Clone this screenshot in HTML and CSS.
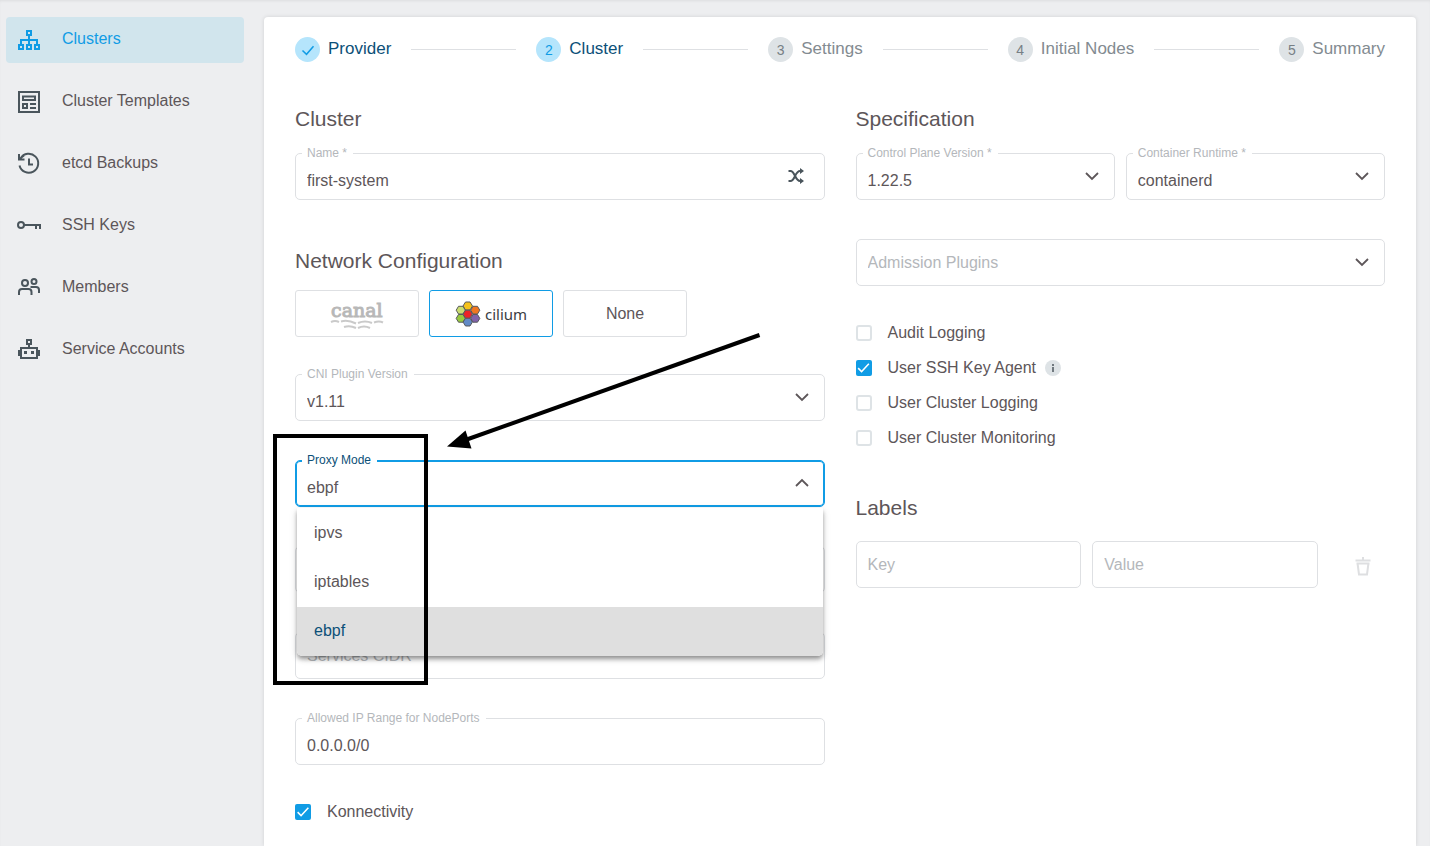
FILE: index.html
```html
<!DOCTYPE html>
<html lang="en">
<head>
<meta charset="utf-8">
<meta name="viewport" content="width=device-width, initial-scale=1">
<title>Create Cluster</title>
<link rel="stylesheet" href="styles.css">
</head>
<body>
<svg class="symbols" aria-hidden="true">
  <symbol id="chevron" viewBox="0 0 16 16"><path d="M2 5l6 6 6-6" fill="none" stroke="currentColor" stroke-width="1.8"/></symbol>
</svg>
<div class="page">
  <nav class="sidebar" aria-label="Project">
    <a class="nav-item active" href="#clusters">
      <svg class="nav-icon" viewBox="0 0 24 24"><g fill="none" stroke="currentColor" stroke-width="2"><path d="M10 3h4v4h-4zM2 17h4v4H2zM10 17h4v4h-4zM18 17h4v4h-4zM12 7v10M4 17v-5h16v5"/></g></svg>
      <span>Clusters</span>
    </a>
    <a class="nav-item" href="#templates">
      <svg class="nav-icon" viewBox="0 0 24 24"><path d="M2 2h20v20H2zM6 6.500h12v3.500H6zM6 14h4v4H6zM13 14h6M13 18h6" fill="none" stroke="currentColor" stroke-width="2"/></svg>
      <span>Cluster Templates</span>
    </a>
    <a class="nav-item" href="#backups">
      <svg class="nav-icon" viewBox="0 0 24 24"><path d="M3.500 6.500A9.500 9.500 0 1 1 2.500 13.500M2 2v5.500h5.500M3 6.500l4-3M12 6.500v6h4" fill="none" stroke="currentColor" stroke-width="2"/></svg>
      <span>etcd Backups</span>
    </a>
    <a class="nav-item" href="#keys">
      <svg class="nav-icon" viewBox="0 0 24 24"><circle cx="4" cy="11" r="3" fill="none" stroke="currentColor" stroke-width="2"/><path d="M7 11h16v4M19 11v4" fill="none" stroke="currentColor" stroke-width="2"/></svg>
      <span>SSH Keys</span>
    </a>
    <a class="nav-item" href="#members">
      <svg class="nav-icon" viewBox="0 0 24 24"><g fill="none" stroke="currentColor" stroke-width="2"><circle cx="8" cy="7" r="3"/><circle cx="17" cy="5.500" r="2.500"/><path d="M2 19v-3q0-3 3-3h6.500q3 0 3 3v3M13.500 11h5.500q3 0 3 3v3"/></g></svg>
      <span>Members</span>
    </a>
    <a class="nav-item" href="#accounts">
      <svg class="nav-icon" viewBox="0 0 24 24"><path d="M4 10h16v10H4zM10 2h4v4h-4zM12 6v4" fill="none" stroke="currentColor" stroke-width="2"/><path d="M7 13h3v3H7zM14 13h3v3h-3zM1 12h3v6H1zM20 12h3v6h-3z" fill="currentColor"/></svg>
      <span>Service Accounts</span>
    </a>
  </nav>

  <main class="card">
    <ol class="stepper">
      <li class="step done"><span class="step-mark"><svg class="step-check" viewBox="0 0 14 14"><path d="M1.500 7.500l4 3.800 7-8" fill="none" stroke="currentColor" stroke-width="1.500"/></svg></span><span class="step-name">Provider</span></li>
      <li class="step-line" aria-hidden="true"></li>
      <li class="step done" aria-current="step"><span class="step-mark">2</span><span class="step-name">Cluster</span></li>
      <li class="step-line" aria-hidden="true"></li>
      <li class="step"><span class="step-mark">3</span><span class="step-name">Settings</span></li>
      <li class="step-line" aria-hidden="true"></li>
      <li class="step"><span class="step-mark">4</span><span class="step-name">Initial Nodes</span></li>
      <li class="step-line" aria-hidden="true"></li>
      <li class="step"><span class="step-mark">5</span><span class="step-name">Summary</span></li>
    </ol>

    <form class="columns">
      <div class="column">
        <section>
          <h2>Cluster</h2>
          <div class="field">
            <label for="name">Name *</label>
            <input id="name" class="control labelled" type="text" value="first-system">
            <button class="field-icon shuffle" type="button" aria-label="Generate name">
              <svg viewBox="0 0 16 16"><path d="M.500 3H2.500C7 3 7 13 12 13h1.500M.500 13H2.500C7 13 7 3 12 3h1.500" fill="none" stroke="currentColor" stroke-width="2"/><path d="M12 0l4 3-4 3zM12 10l4 3-4 3z" fill="currentColor"/></svg>
            </button>
          </div>
        </section>
        <section class="network">
          <h2>Network Configuration</h2>
          <div class="cni-options">
            <button class="cni" type="button" aria-label="Canal">
              <svg class="canal-logo" viewBox="0 0 54 34"><text x="1" y="20" class="canal-text">canal</text><path d="M1 25q4-2 8 0M11 24.500q7-2 15 2M28 26q7-3 14 0M44 25.500q5-2 9 0M14 30q6-2 12 1M28 31q6-3 12 0" fill="none" stroke="#cacaca" stroke-width="2"/></svg>
            </button>
            <button class="cni selected" type="button" aria-label="Cilium">
              <svg class="cilium-logo" viewBox="0 0 72 28">
                <g stroke="#56585c" stroke-width="1">
                  <path fill="#f5c21b" d="M10.500 2h4.500l2.500 4L15 10h-4.500L8 6z"/>
                  <path fill="#cadd72" d="M3.500 6.300H8l2.300 3.900L8 14H3.500L1.200 10.200z"/>
                  <path fill="#f07722" d="M18 6.300h4.500l2.300 3.900-2.300 3.800H18l-2.300-3.800z"/>
                  <path fill="#98c93e" d="M3.500 14.500H8l2.300 3.900L8 22.200H3.500l-2.300-3.800z"/>
                  <path fill="#8162aa" d="M18 14.500h4.500l2.300 3.900-2.300 3.800H18l-2.300-3.800z"/>
                  <path fill="#628ac6" d="M10.500 18.200H15l2.400 3.900-2.400 3.900h-4.500l-2.400-3.900z"/>
                  <path fill="#ec2227" d="M10.500 10.200H15l2.400 4-2.400 3.900h-4.500l-2.400-3.900z"/>
                </g>
                <text x="30" y="20" class="cilium-text">cilium</text>
              </svg>
            </button>
            <button class="cni" type="button">None</button>
          </div>
          <div class="fields">
            <div class="field">
              <label for="cni-version">CNI Plugin Version</label>
              <select id="cni-version" class="control labelled"><option>v1.11</option></select>
              <svg class="field-icon"><use href="#chevron"/></svg>
            </div>
            <div class="field open">
              <label for="proxy">Proxy Mode</label>
              <select id="proxy" class="control labelled"><option>ebpf</option><option>ipvs</option><option>iptables</option></select>
              <svg class="field-icon"><use href="#chevron"/></svg>
              <ul class="menu" role="listbox" aria-label="Proxy Mode">
                <li role="option" aria-selected="false">ipvs</li>
                <li role="option" aria-selected="false">iptables</li>
                <li role="option" aria-selected="true">ebpf</li>
              </ul>
              <div class="highlight-box"></div>
              <svg class="highlight-arrow" viewBox="0 0 316 120" aria-hidden="true"><path d="M18 110.500L313.500 5" stroke="#000" stroke-width="4"/><path d="M1 116.500L19.500 100.500 25.500 118.500z"/></svg>
            </div>
            <div class="field"><input class="control" type="text" aria-label="Pods CIDR"></div>
            <div class="field"><input class="control" type="text" placeholder="Services CIDR" aria-label="Services CIDR"></div>
            <div class="field">
              <label for="range">Allowed IP Range for NodePorts</label>
              <input id="range" class="control labelled" type="text" value="0.0.0.0/0">
            </div>
          </div>
          <div class="checks">
            <label class="check"><input type="checkbox" checked>Konnectivity</label>
          </div>
        </section>
      </div>

      <div class="column">
        <section>
          <h2>Specification</h2>
          <div class="fields">
            <div class="field-row">
              <div class="field">
                <label for="version">Control Plane Version *</label>
                <select id="version" class="control labelled"><option>1.22.5</option></select>
                <svg class="field-icon"><use href="#chevron"/></svg>
              </div>
              <div class="field">
                <label for="runtime">Container Runtime *</label>
                <select id="runtime" class="control labelled"><option>containerd</option></select>
                <svg class="field-icon"><use href="#chevron"/></svg>
              </div>
            </div>
            <div class="field">
              <select class="control empty" aria-label="Admission Plugins"><option>Admission Plugins</option></select>
              <svg class="field-icon"><use href="#chevron"/></svg>
            </div>
          </div>
          <div class="checks">
            <label class="check"><input type="checkbox">Audit Logging</label>
            <label class="check"><input type="checkbox" checked>User SSH Key Agent<svg class="info" viewBox="0 0 16 16"><circle cx="8" cy="8" r="8" fill="#dee3e6"/><path d="M7 4h2v2H7zM7 7h2v5H7z" fill="#71797f"/></svg></label>
            <label class="check"><input type="checkbox">User Cluster Logging</label>
            <label class="check"><input type="checkbox">User Cluster Monitoring</label>
          </div>
        </section>
        <section class="labels">
          <h2>Labels</h2>
          <div class="label-row">
            <div class="field-row">
              <div class="field"><input class="control" type="text" placeholder="Key" aria-label="Key"></div>
              <div class="field"><input class="control" type="text" placeholder="Value" aria-label="Value"></div>
            </div>
            <button class="delete" type="button" aria-label="Delete label" disabled>
              <svg viewBox="0 0 16 20"><path d="M8 0v3M.500 3.500h15M1.500 6.500h13M2.500 6l1.500 11.500h8L13.500 6" fill="none" stroke="currentColor" stroke-width="2"/></svg>
            </button>
          </div>
        </section>
      </div>
    </form>
  </main>
</div>
</body>
</html>
```
FILE: styles.css
```css
* {
  box-sizing: border-box;
}

body {
  margin: 0;
  background: #edeef0;
  color: #5d5659;
  font: 16px/24px "Liberation Sans", Arial, sans-serif;
}

button, input, select {
  margin: 0;
  font: inherit;
  color: inherit;
}

ul, ol {
  margin: 0;
  padding: 0;
  list-style: none;
}

.symbols {
  display: none;
}

.page {
  display: flex;
  gap: 20px;
  min-height: 100vh;
  padding: 17px 14px 0 6px;
  box-shadow: inset 0 2px 3px -1px rgba(0, 0, 0, 0.07);
}

/* Sidebar */
.sidebar {
  display: flex;
  flex: 0 0 238px;
  flex-direction: column;
  gap: 16px;
}

.nav-item {
  display: flex;
  align-items: center;
  gap: 21px;
  height: 46px;
  padding-left: 11px;
  border-radius: 4px;
  color: inherit;
  text-decoration: none;
}

.nav-item span {
  padding-bottom: 3px;
}

.nav-icon {
  width: 24px;
  height: 24px;
  color: #4a555c;
}

.nav-item.active,
.active .nav-icon {
  color: #109ce5;
}

.nav-item.active {
  background: #d1e5ed;
}

/* Wizard card */
.card {
  flex: 1;
  min-width: 0;
  padding: 20px 31px 22px;
  border-radius: 4px 4px 0 0;
  background: #fff;
  box-shadow: 0 0 4px rgba(0, 0, 0, 0.12);
}

.stepper {
  display: flex;
  align-items: center;
  gap: 20px;
  margin-bottom: 45px;
  color: #838b91;
}

.step {
  display: flex;
  align-items: center;
  gap: 8px;
  font-size: 17px;
}

.step-name {
  padding-bottom: 2px;
  line-height: 22px;
}

.step-mark {
  display: flex;
  align-items: center;
  justify-content: center;
  width: 25px;
  height: 25px;
  border-radius: 50%;
  background: #dee3e6;
  color: #777f85;
  font-size: 14px;
}

.step-check {
  width: 14px;
  height: 14px;
}

.step.done {
  color: #0c5078;
}

.done .step-mark {
  background: #b5e5fc;
  color: #109ce5;
}

.step-line {
  flex: 1;
  height: 1px;
  background: #dee0e3;
}

.columns {
  display: grid;
  grid-template-columns: 1fr 1fr;
  gap: 31px;
}

h2 {
  margin: 0 0 22px;
  font-size: 21px;
  font-weight: 400;
  line-height: 24px;
}

.network {
  margin-top: 49px;
}

.network h2 {
  margin-bottom: 17px;
}

.labels {
  margin-top: 46px;
}

.labels h2 {
  margin-bottom: 21px;
}

/* Outlined fields */
.fields {
  display: flex;
  flex-direction: column;
  gap: 39px;
}

.field-row {
  display: flex;
  flex: 1;
  gap: 11px;
}

.field {
  position: relative;
  flex: 1 0 auto;
  min-width: 0;
  height: 47px;
  border: 1px solid #dee0e3;
  border-radius: 5px;
}

.field-row .field {
  flex: 1;
}

.field > label {
  position: absolute;
  top: -9px;
  left: 6px;
  padding: 0 6px 0 5px;
  background: #fff;
  color: #b4b7bb;
  font-size: 12px;
  line-height: 16px;
}

.control {
  display: block;
  width: 100%;
  height: 100%;
  padding: 0 11px;
  border: 0;
  outline: 0;
  background: transparent;
  appearance: none;
}

.control.labelled {
  padding-top: 8px;
}

.control::placeholder,
.control.empty {
  color: #b4b7bb;
  opacity: 1;
}

.field-icon {
  position: absolute;
  top: 14px;
  right: 14px;
  width: 16px;
  height: 16px;
  color: #5d5659;
  pointer-events: none;
}

.shuffle {
  right: 20px;
  padding: 0;
  border: 0;
  background: none;
  color: #4a555c;
  pointer-events: auto;
}

.shuffle svg {
  display: block;
}

.field.open {
  z-index: 1;
  border-color: #109ce5;
  box-shadow: inset 0 0 0 1px #109ce5;
}

.open > label {
  color: #0c5078;
}

.open .field-icon {
  transform: rotate(180deg);
}

.menu {
  position: absolute;
  top: 47px;
  right: 1px;
  left: 1px;
  padding-top: 1px;
  border-radius: 0 0 5px 5px;
  background: #fff;
  box-shadow: 0 3px 4px -1px rgba(0, 0, 0, 0.3), 0 4px 5px rgba(0, 0, 0, 0.14), 0 2px 8px rgba(0, 0, 0, 0.12);
}

.menu li {
  padding: 12px 17px 13px;
}

.menu li[aria-selected="true"] {
  border-radius: 0 0 5px 5px;
  background: #dfdfdf;
  color: #0c5078;
}

/* Callout over the proxy mode field */
.highlight-box {
  position: absolute;
  top: -27px;
  left: -23px;
  width: 155px;
  height: 251px;
  border: 4px solid #000;
  pointer-events: none;
}

.highlight-arrow {
  position: absolute;
  top: -131px;
  left: 150px;
  width: 316px;
  height: 120px;
  pointer-events: none;
}

/* CNI choices */
.cni-options {
  display: flex;
  gap: 10px;
  margin-bottom: 37px;
}

.cni {
  display: flex;
  align-items: center;
  justify-content: center;
  width: 124px;
  height: 47px;
  padding: 0;
  border: 1px solid #dee0e3;
  border-radius: 3px;
  background: #fff;
}

.cni.selected {
  border-color: #109ce5;
}

.canal-logo {
  width: 54px;
  height: 34px;
}

.canal-text {
  fill: #b8b8b8;
  stroke: #b8b8b8;
  stroke-width: 1px;
  font: 19px "DejaVu Serif", serif;
}

.cilium-logo {
  width: 72px;
  height: 28px;
}

.cilium-text {
  fill: #3a3d42;
  font: 15px "Noto Sans", sans-serif;
}

/* Check boxes */
.checks {
  display: flex;
  flex-direction: column;
  align-items: flex-start;
  gap: 11px;
  margin-top: 35px;
}

.check {
  display: flex;
  align-items: center;
}

.check input {
  flex: none;
  width: 16px;
  height: 16px;
  margin-right: 16px;
  border: 2px solid #dee3e6;
  border-radius: 3px;
  background: #fff;
  appearance: none;
}

.check input:checked {
  border: 0;
  border-radius: 2px;
  background: #109ce5;
}

.check input:checked::before {
  display: block;
  width: 16px;
  height: 16px;
  background: #fff;
  clip-path: polygon(13% 54%, 20% 47%, 38% 65%, 80% 20%, 87% 27%, 38% 80%);
  content: "";
}

.info {
  width: 16px;
  height: 16px;
  margin-left: 9px;
}

/* Label rows */
.label-row {
  display: flex;
}

.delete {
  width: 67px;
  padding: 4px 0 0 22px;
  border: 0;
  background: none;
  color: #dedfe1;
}

.delete svg {
  display: block;
  width: 16px;
  height: 20px;
  margin: 0 auto;
}
```
